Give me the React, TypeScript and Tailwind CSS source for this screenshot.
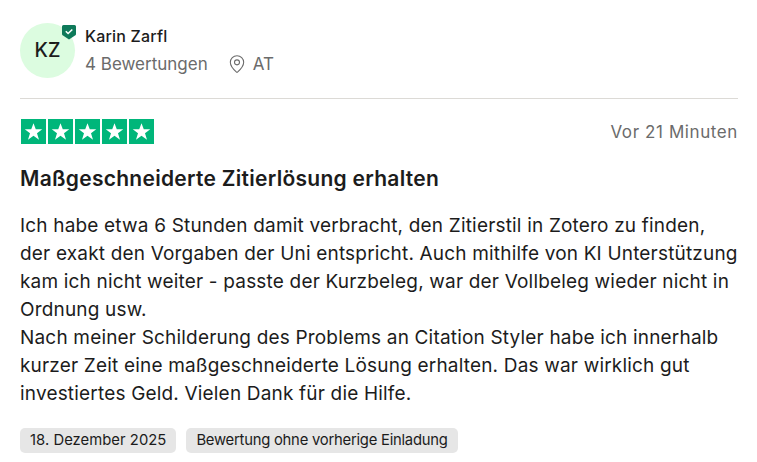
import { MapPin } from 'lucide-react'

const bodyLines = [
  'Ich habe etwa 6 Stunden damit verbracht, den Zitierstil in Zotero zu finden,',
  'der exakt den Vorgaben der Uni entspricht. Auch mithilfe von KI Unterstützung',
  'kam ich nicht weiter - passte der Kurzbeleg, war der Vollbeleg wieder nicht in',
  'Ordnung usw.',
  'Nach meiner Schilderung des Problems an Citation Styler habe ich innerhalb',
  'kurzer Zeit eine maßgeschneiderte Lösung erhalten. Das war wirklich gut',
  'investiertes Geld. Vielen Dank für die Hilfe.',
]

function Star() {
  return (
    <div className="w-[25px] h-[25px] bg-[#00b67a] flex items-center justify-center">
      <svg viewBox="0 0 24 24" className="w-[21px] h-[21px]">
        <path fill="#fff" d="M12 2.500l2.600 7h7.400l-6 4.500 2.300 7.500-6.300-4.600-6.300 4.600 2.300-7.500-6-4.500h7.400z" />
      </svg>
    </div>
  )
}

export default function App() {
  return (
    <div className="w-[757px] h-[462px] bg-white pl-5 pr-[19px] pt-[23px] overflow-hidden font-['Inter',sans-serif] text-[#1c1c1c]">
      {/* header */}
      <div className="flex items-center h-[55px]">
        <div className="relative w-[55px] h-[55px] rounded-full bg-[#dcfce0] flex items-center justify-center text-[19.500px] font-medium">
          KZ
          <svg viewBox="0 0 14 15" className="absolute right-[-1px] top-[2px] w-[14px] h-[15px]">
            <path fill="#0e7a5a" d="M0 1.500A1.500 1.500 0 0 1 1.500 0h11A1.500 1.500 0 0 1 14 1.500V9q0 1-1 1.600L7 14.500 1 10.600Q0 10 0 9z" />
            <path fill="none" stroke="#fff" strokeWidth="1.600" d="M3.800 6.200l2.300 2.300 4.200-4" />
          </svg>
        </div>
        <div className="ml-[10px]">
          <div className="text-[16px] leading-[26px] font-medium tracking-[0.2px]">Karin Zarfl</div>
          <div className="flex items-center text-[17px] leading-[28px] text-[#6b6b6b] mt-[1px]">
            <span>4 Bewertungen</span>
            <MapPin className="w-[20px] h-[20px] ml-[19px] mr-[6px]" strokeWidth={1.3} />
            <span>AT</span>
          </div>
        </div>
      </div>

      <div className="h-px bg-[#dcdad6] mt-[20px]" />

      <div className="flex items-center justify-between mt-[20px] h-[25px]">
        <div className="flex gap-[2px] ml-[1px]">
          <Star />
          <Star />
          <Star />
          <Star />
          <Star />
        </div>
        <span className="text-[17px] tracking-[0.6px] text-[#6b6b6b] mt-[2px]">Vor 21 Minuten</span>
      </div>

      <h2 className="text-[21px] leading-[28px] font-semibold mt-[21px] tracking-[0.28px]">Maßgeschneiderte Zitierlösung erhalten</h2>

      <div className="mt-[19px] text-[19px] leading-[28px] tracking-[0.18px]">
        {bodyLines.map(l => (
          <div key={l} className="whitespace-nowrap">{l}</div>
        ))}
      </div>

      <div className="flex gap-[10px] mt-[20px] text-[14.800px] leading-[25px]">
        <span className="px-[10px] rounded-[5px] bg-[#e6e6e6] tracking-[0.04px]">18. Dezember 2025</span>
        <span className="px-[10px] rounded-[5px] bg-[#e6e6e6] tracking-[-0.23px]">Bewertung ohne vorherige Einladung</span>
      </div>
    </div>
  )
}
